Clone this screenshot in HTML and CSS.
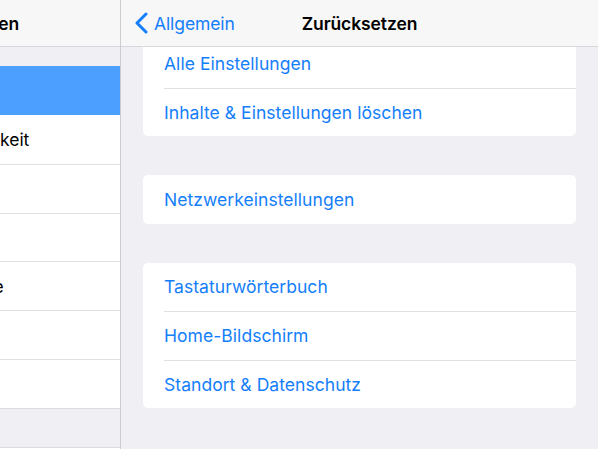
FILE: index.html
```html
<!DOCTYPE html>
<html lang="de">
<head>
<meta charset="utf-8">
<title>Zurücksetzen</title>
<link rel="stylesheet" href="styles.css">
</head>
<body>
<div class="app">
  <aside class="sidebar">
    <div class="sidebar-inner">
      <header class="side-bar-head"><span class="side-title">Einstellungen</span></header>
      <div class="side-gap"></div>
      <ul class="side-group">
        <li class="side-row selected"><span class="side-icon"></span><span class="side-label">Allgemein</span></li>
        <li class="side-row"><span class="side-icon"></span><span class="side-label">Anzeige &amp; Helligkeit</span></li>
        <li class="side-row"><span class="side-icon"></span><span class="side-label">Hintergrundbild</span></li>
        <li class="side-row"><span class="side-icon"></span><span class="side-label">Töne</span></li>
        <li class="side-row"><span class="side-icon"></span><span class="side-label">Touch ID &amp; Code</span></li>
        <li class="side-row"><span class="side-icon"></span><span class="side-label">Batterie</span></li>
        <li class="side-row"><span class="side-icon"></span><span class="side-label">Datenschutz</span></li>
      </ul>
      <div class="side-gap big"></div>
      <ul class="side-group">
        <li class="side-row"><span class="side-icon"></span><span class="side-label">iTunes &amp; App Store</span></li>
      </ul>
    </div>
  </aside>
  <main class="detail">
    <header class="navbar">
      <a class="back" href="#">
        <svg class="chevron" width="14" height="22" viewBox="0 0 14 22" aria-hidden="true">
          <polyline points="12,2 3,11 12,20" fill="none" stroke="currentColor" stroke-width="3" stroke-linecap="round" stroke-linejoin="round"/>
        </svg>
        <span>Allgemein</span>
      </a>
      <h1 class="nav-title">Zurücksetzen</h1>
      <span></span>
    </header>
    <div class="content">
      <ul class="card">
        <li class="cell">Alle Einstellungen</li>
        <li class="cell">Inhalte &amp; Einstellungen löschen</li>
      </ul>
      <ul class="card">
        <li class="cell">Netzwerkeinstellungen</li>
      </ul>
      <ul class="card">
        <li class="cell">Tastaturwörterbuch</li>
        <li class="cell">Home-Bildschirm</li>
        <li class="cell">Standort &amp; Datenschutz</li>
      </ul>
    </div>
  </main>
</div>
</body>
</html>
```

FILE: styles.css
```css
* { box-sizing: border-box; }
html, body {
  margin: 0;
  padding: 0;
  width: 598px;
  height: 449px;
  overflow: hidden;
  background: #efeff4;
  font-family: Inter, "Noto Sans", "Liberation Sans", sans-serif;
  -webkit-font-smoothing: antialiased;
}
ul { list-style: none; margin: 0; padding: 0; }

.app {
  display: flex;
  height: 449px;
}

/* ---------- sidebar ---------- */
.sidebar {
  width: 121px;
  flex: none;
  overflow: hidden;
  border-right: 1px solid #cdcdd1;
  background: #efeff4;
}
.sidebar-inner {
  width: 320px;
  margin-left: -197px;
}
.side-bar-head {
  height: 47px;
  background: #f7f7f7;
  border-bottom: 1px solid #d8d8dc;
  display: flex;
  align-items: center;
  justify-content: center;
}
.side-title {
  font-size: 17.5px;
  font-weight: 600;
  color: #000;
  letter-spacing: -0.2px;
}
.side-gap { height: 19px; }
.side-gap.big { height: 37.5px; }
.side-group {
  background: #fff;
}
.side-group:last-child { border-top: 1px solid #dcdce0; }
.side-row {
  height: 48.86px;
  display: flex;
  align-items: center;
  gap: 15px;
  padding-left: 18px;
  font-size: 17.5px;
  color: #000;
  border-top: 1px solid #e0e0e4;
}
.side-row:first-child,
.side-row.selected + .side-row { border-top: none; }
.side-group:first-of-type { border-bottom: 1px solid #dcdce0; }
.side-row.selected {
  background: #4c9ffe;
  color: #fff;
}
.side-icon {
  width: 29px;
  height: 29px;
  border-radius: 7px;
  background: #8e8e93;
  flex: none;
}

/* ---------- detail ---------- */
.detail {
  flex: 1;
  position: relative;
  overflow: hidden;
  background: #efeff4;
}
.navbar {
  position: absolute;
  top: 0;
  left: 0;
  right: 0;
  z-index: 2;
  height: 47px;
  background: #f7f7f7;
  border-bottom: 1px solid #d8d8dc;
  display: grid;
  grid-template-columns: 1fr auto 1fr;
  align-items: center;
}
.back {
  display: flex;
  align-items: center;
  gap: 6px;
  padding-left: 13px;
  color: #147efb;
  text-decoration: none;
  font-size: 17.5px;
  letter-spacing: -0.1px;
}
.chevron { display: block; }
.nav-title {
  margin: 0;
  font-size: 17.5px;
  font-weight: 600;
  color: #000;
  letter-spacing: -0.1px;
}

.content {
  padding: 39px 22px 0;
  display: flex;
  flex-direction: column;
  gap: 38.8px;
}
.card {
  background: #fff;
  border-radius: 5px;
  overflow: hidden;
}
.cell {
  height: 48.65px;
  display: flex;
  align-items: center;
  margin-left: 21px;
  font-size: 17.5px;
  color: #147efb;
  letter-spacing: 0.05px;
}
.cell + .cell { border-top: 1px solid #e0e0e4; }
```
